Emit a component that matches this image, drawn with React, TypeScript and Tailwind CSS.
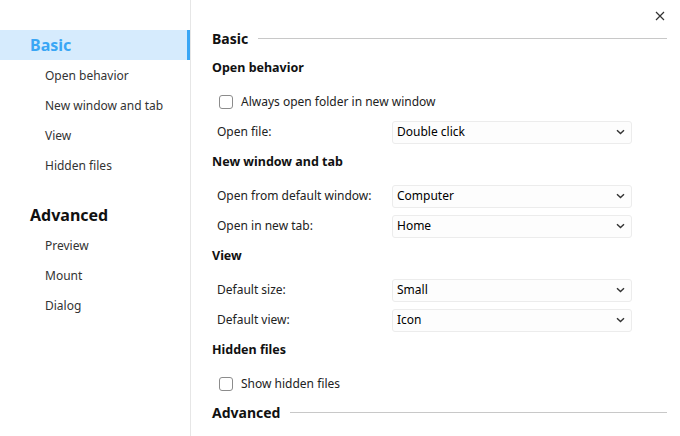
const font = { fontFamily: '"Noto Sans", "Open Sans", sans-serif' };

type Nav = { title: string; items: string[]; active?: boolean };

const nav: Nav[] = [
  { title: "Basic", items: ["Open behavior", "New window and tab", "View", "Hidden files"], active: true },
  { title: "Advanced", items: ["Preview", "Mount", "Dialog"] },
];

function Chevron() {
  return (
    <svg width="9" height="6" viewBox="0 0 9 6" className="text-[#333]">
      <path d="M1 1.2 L4.5 4.6 L8 1.2" fill="none" stroke="currentColor" strokeWidth="1.4" />
    </svg>
  );
}

function Select({ value }: { value: string }) {
  return (
    <div className="flex h-[23px] w-[240px] items-center justify-between rounded-[3px] border border-[#ececec] bg-[#fdfdfd] pl-[4px] pr-[6px] text-[12px] text-black">
      <span>{value}</span>
      <Chevron />
    </div>
  );
}

function Checkbox({ label }: { label: string }) {
  return (
    <div className="flex h-[30px] items-center pl-[7px] text-[12px] text-[#222]">
      <span className="mr-[8px] h-[14px] w-[14px] rounded-[3px] border border-[#8c8c8c] bg-white" />
      <span>{label}</span>
    </div>
  );
}

function Row({ label, value }: { label: string; value: string }) {
  return (
    <div className="flex h-[30px] items-center pl-[5px]">
      <span className="w-[175px] text-[12px] text-[#222]">{label}</span>
      <Select value={value} />
    </div>
  );
}

function Group({ title }: { title: string }) {
  return <div className="flex h-[30px] items-center text-[12.5px] font-bold text-[#111]">{title}</div>;
}

function Section({ title }: { title: string }) {
  return (
    <div className="flex h-[26px] items-center gap-[10px] pb-[4px] pr-[13px]">
      <span className="text-[14px] font-bold text-[#111]">{title}</span>
      <div className="h-px flex-1 bg-[#c8c8c8]" />
    </div>
  );
}

export default function App() {
  return (
    <div className="flex h-[436px] w-[680px] overflow-hidden bg-white" style={font}>
      {/* sidebar */}
      <div className="flex w-[191px] shrink-0 flex-col border-r border-[#e6e6e6] pt-[30px]">
        {nav.map((n, i) => (
          <div key={n.title} className={i > 0 ? "mt-[20px]" : ""}>
            <div
              className={`flex h-[30px] items-center pl-[30px] text-[16px] font-bold ${
                n.active ? "border-r-[3px] border-[#3aa6f5] bg-[#d6ebfd] text-[#3aa6f5]" : "text-[#111]"
              }`}
            >
              {n.title}
            </div>
            {n.items.map((it) => (
              <div key={it} className="flex h-[30px] items-center pl-[45px] pt-[1px] text-[12px] text-[#333]">
                {it}
              </div>
            ))}
          </div>
        ))}
      </div>

      {/* content */}
      <div className="relative flex flex-1 flex-col pl-[21px] pt-[27px]">
        <button className="absolute right-[12px] top-[8px] flex h-[16px] w-[16px] items-center justify-center text-[#333]">
          <svg width="10" height="10" viewBox="0 0 10 10">
            <path d="M1 1 L9 9 M9 1 L1 9" stroke="currentColor" strokeWidth="1.2" />
          </svg>
        </button>

        <Section title="Basic" />
        <Group title="Open behavior" />
        <div className="mt-[4px]">
          <Checkbox label="Always open folder in new window" />
        </div>
        <Row label="Open file:" value="Double click" />
        <Group title="New window and tab" />
        <div className="mt-[4px]">
          <Row label="Open from default window:" value="Computer" />
          <Row label="Open in new tab:" value="Home" />
        </div>
        <Group title="View" />
        <div className="mt-[4px]">
          <Row label="Default size:" value="Small" />
          <Row label="Default view:" value="Icon" />
        </div>
        <Group title="Hidden files" />
        <div className="mt-[4px]">
          <Checkbox label="Show hidden files" />
        </div>
        <div className="mt-[2px]">
          <Section title="Advanced" />
        </div>
      </div>
    </div>
  );
}
